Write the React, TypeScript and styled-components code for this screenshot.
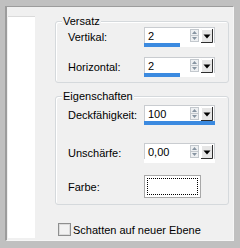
import React from "react";
import styled, { createGlobalStyle } from "styled-components";

const GlobalStyle = createGlobalStyle`
  html, body {
    margin: 0;
    padding: 0;
  }
  body {
    font-family: "Liberation Sans", Arial, sans-serif;
    font-size: 11px;
    color: #000000;
  }
`;

const Frame = styled.div`
  width: 240px;
  height: 248px;
  box-sizing: border-box;
  padding: 6px 6px 7px 5px;
  background: #c0c0c0;
`;

const Window = styled.div`
  display: flex;
  height: 100%;
  box-sizing: border-box;
  background: #f0f0f0;
  border-left: 2px solid #9c9c9c;
  border-top: 1px solid #9c9c9c;
  border-right: 1px solid #f6f6f6;
  border-bottom: 1px solid #f6f6f6;
`;

const SidePanel = styled.div`
  width: 27px;
  margin: 9px 0 2px 1px;
  background: #ffffff;
  border-top: 1px solid #dadada;
`;

const Content = styled.div`
  flex: 1;
  display: flex;
  flex-direction: column;
  padding: 14px 4px 0 20px;
`;

const GroupBox = styled.div<{ $top?: number }>`
  position: relative;
  display: flex;
  flex-direction: column;
  margin-top: ${(p) => p.$top ?? 0}px;
  padding: 0 0 0 12px;
  border: 1px solid #d5d9dc;
  border-radius: 3px;
  box-shadow: inset 1px 1px 0 #ffffff;
`;

// title sits over the top border of the box
const Legend = styled.span`
  position: absolute;
  top: -7px;
  left: 6px;
  padding: 0 1px;
  line-height: 13px;
  background: #f0f0f0;
`;

const Row = styled.div<{ $top: number; $bottom?: number; $h?: number }>`
  display: flex;
  align-items: center;
  height: ${(p) => p.$h ?? 20}px;
  margin-top: ${(p) => p.$top}px;
  margin-bottom: ${(p) => p.$bottom ?? 0}px;
`;

const Label = styled.span`
  width: 76px;
`;

const Spin = styled.div`
  display: flex;
  flex-direction: column;
  width: 71px;
  height: 20px;
  box-sizing: border-box;
  border: 1px solid #c9ccd0;
  background: #ffffff;
`;

const SpinTop = styled.div`
  flex: 1;
  display: flex;
  align-items: center;
  padding: 0 1px 0 3px;
`;

const Value = styled.span`
  flex: 1;
`;

const Bar = styled.div`
  height: 4px;
  margin: 0 -1px -1px;
  background: #ffffff;
`;

const BarFill = styled.div`
  height: 100%;
  background: #3b8ae0;
`;

const Arrows = styled.svg`
  display: block;
  margin-right: 2px;
`;

const Drop = styled.svg`
  display: block;
`;

const Swatch = styled.div`
  width: 57px;
  height: 23px;
  box-sizing: border-box;
  border: 1px solid #a8a8a8;
  background: #ffffff;
  outline: 1px dotted #000000;
  outline-offset: -4px;
`;

const CheckRow = styled.label`
  display: flex;
  align-items: center;
  height: 13px;
  margin-top: 18px;
  padding-left: 3px;
`;

const Box = styled.span`
  width: 13px;
  height: 13px;
  box-sizing: border-box;
  margin-right: 2px;
  border: 1px solid #8e8f8f;
  background: #f2f2f2;
  box-shadow: inset 0 0 0 1px #dcdcdc;
`;

const SpinBox: React.FC<{ value: string; fill?: number }> = ({ value, fill }) => (
  <Spin>
    <SpinTop>
      <Value>{value}</Value>
      <Arrows width="9" height="13" viewBox="0 0 9 13">
        <rect x="0.5" y="0.5" width="8" height="12" fill="#eef0f2" stroke="#c3c8cd" />
        <line x1="1" y1="6.5" x2="8" y2="6.5" stroke="#c3c8cd" />
        <path d="M2 5 L4.5 2 L7 5 Z" fill="#8794a1" />
        <path d="M2 8 L7 8 L4.5 11 Z" fill="#8794a1" />
      </Arrows>
      <Drop width="12" height="14" viewBox="0 0 12 14">
        <rect x="0" y="0" width="12" height="14" fill="#e6e6e6" />
        <path d="M0.5 13.5 V0.5 H11.5" fill="none" stroke="#ffffff" />
        <path d="M0 13.5 H11.5 V0" fill="none" stroke="#2e2e2e" />
        <path d="M2.5 5.5 L9.5 5.5 L6 9.5 Z" fill="#000000" />
      </Drop>
    </SpinTop>
    <Bar>{fill !== undefined && <BarFill style={{ width: `${fill}%` }} />}</Bar>
  </Spin>
);

const App: React.FC = () => {
  return (
    <Frame>
      <GlobalStyle />
      <Window>
        <SidePanel />
        <Content>
          <GroupBox>
            <Legend>Versatz</Legend>
            <Row $top={5}>
              <Label>Vertikal:</Label>
              <SpinBox value="2" fill={51} />
            </Row>
            <Row $top={10} $bottom={5}>
              <Label>Horizontal:</Label>
              <SpinBox value="2" fill={51} />
            </Row>
          </GroupBox>
          <GroupBox $top={13}>
            <Legend>Eigenschaften</Legend>
            <Row $top={8}>
              <Label>Deckfähigkeit:</Label>
              <SpinBox value="100" fill={100} />
            </Row>
            <Row $top={18}>
              <Label>Unschärfe:</Label>
              <SpinBox value="0,00" />
            </Row>
            <Row $top={12} $bottom={6} $h={23}>
              <Label>Farbe:</Label>
              <Swatch />
            </Row>
          </GroupBox>
          <CheckRow>
            <Box />
            Schatten auf neuer Ebene
          </CheckRow>
        </Content>
      </Window>
    </Frame>
  );
};

export default App;
